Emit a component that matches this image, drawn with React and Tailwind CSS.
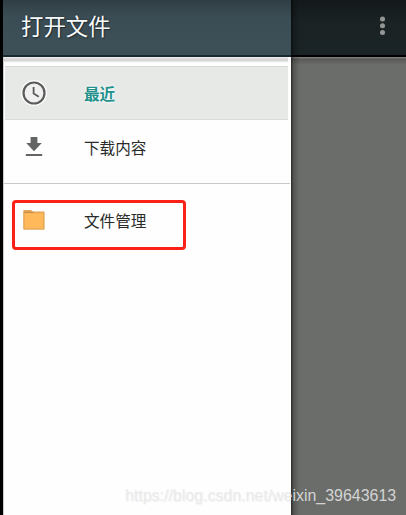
function ClockIcon() {
  return (
    <svg className="block size-[30px] overflow-visible" viewBox="0 0 30 30" fill="none">
      <circle cx="15" cy="15" r="13" fill="#fafbfa" />
      <circle cx="15" cy="15" r="10.5" fill="#eff0ef" stroke="#5a5c5b" strokeWidth="2.2" />
      <path d="M14.6 9v6.4l5.2 3.3" stroke="#5a5c5b" strokeWidth="1.8" />
    </svg>
  );
}

function DownloadIcon() {
  return (
    <svg className="block size-[30px]" viewBox="0 0 30 30" fill="#636564">
      <path d="M11.6 4h6.8v6h4.4L15 18.2 7.2 10h4.4z" />
      <path d="M6.8 21h16.4v2H6.8z" />
    </svg>
  );
}

function FolderIcon() {
  return (
    <svg className="block size-[30px]" viewBox="0 0 30 30">
      <path d="M4.2 6.2q0-1.2 1.2-1.2h6.6l1.6 1.6h11.2q.8 0 .8.8v16.6q0 .8-.8.8H5q-.8 0-.8-.8z" fill="#e3a656" />
      <path d="M5.6 8.2h18.6v15.2H5.6z" fill="#ffb95a" />
      <path d="M5 7.4h8.8l1.2-.6" stroke="#c48445" strokeWidth=".8" fill="none" />
    </svg>
  );
}

export default function App() {
  return (
    <div className="relative flex h-[515px] w-[406px] overflow-hidden bg-black pl-[3px] font-['Noto_Sans_CJK_SC',sans-serif]">
      <aside className="flex w-[288px] shrink-0 flex-col border-l border-[#c9cccb] bg-[#fdfefd]">
        <header className="-ml-px flex h-[57px] shrink-0 items-center border-b-2 border-[#1b2930] bg-linear-to-b from-[#303e44] via-[#3b4d54] via-30% to-[#3d5058] pb-[5px] pl-[18px]">
          <h1 className="text-[22.4px] leading-[30px] text-[#f8fafa] [text-shadow:0_0_2px_#1c2a30,1px_1px_1px_#25343b]">打开文件</h1>
        </header>
        <div className="mr-[3px] h-[9px] shrink-0 bg-linear-to-b from-[#f1eef0] via-[#d2d0d0] via-35% to-white to-65%" />
        <nav className="flex flex-col text-[15.6px] leading-[20px] text-[#292b2a]">
          <div className="mr-[3px] ml-px flex h-[54px] items-center border-y border-[#d9dbd9] bg-[#e7e9e7] pl-[14px]">
            <ClockIcon />
            <span className="-mt-px ml-[35px] font-bold text-[#23908c] [text-shadow:0_0_2px_#fff,0_0_3px_#fff]">最近</span>
          </div>
          <div className="mr-px flex h-[64px] items-start border-b border-[#c8cac9] pt-[13px] pl-[15px]">
            <DownloadIcon />
            <span className="mt-[4px] ml-[35px]">下载内容</span>
          </div>
          <div className="mt-[16px] ml-[8px] flex h-[50px] w-[174px] items-start rounded-[4px] border-3 border-[#fb2116] pt-[2px] pl-[4px]">
            <FolderIcon />
            <span className="mt-[5px] ml-[35px]">文件管理</span>
          </div>
        </nav>
      </aside>
      <main className="flex flex-1 flex-col bg-[#6b6d6a]">
        <header className="flex h-[57px] shrink-0 justify-end border-b-2 border-black bg-linear-to-b from-[#13191b] via-[#1a2224] via-40% to-[#1a2325] pt-[16px] pr-[21px]">
          <svg className="h-[20px] w-[5px] overflow-visible" viewBox="0 0 5 20" fill="#959796">
            <circle cx="2.5" cy="3" r="2.5" />
            <circle cx="2.5" cy="9.7" r="2.5" />
            <circle cx="2.5" cy="16.4" r="2.5" />
          </svg>
        </header>
        <div className="h-[8px] bg-linear-to-b from-[#8b898a] via-[#595a58] via-25% to-[#6b6d6a]" />
      </main>
      <div className="absolute top-0 left-[291px] h-[515px] w-[9px] bg-linear-to-r from-black/60 via-black/20 via-30% to-transparent" />
      <p className="absolute top-[485px] left-[125px] font-['Liberation_Sans',sans-serif] text-[15.95px] leading-[22px] whitespace-nowrap text-[#e8e8e8]/85 [text-shadow:1px_1px_1px_#77777718]">
        https://blog.csdn.net/weixin_39643613
      </p>
    </div>
  );
}
